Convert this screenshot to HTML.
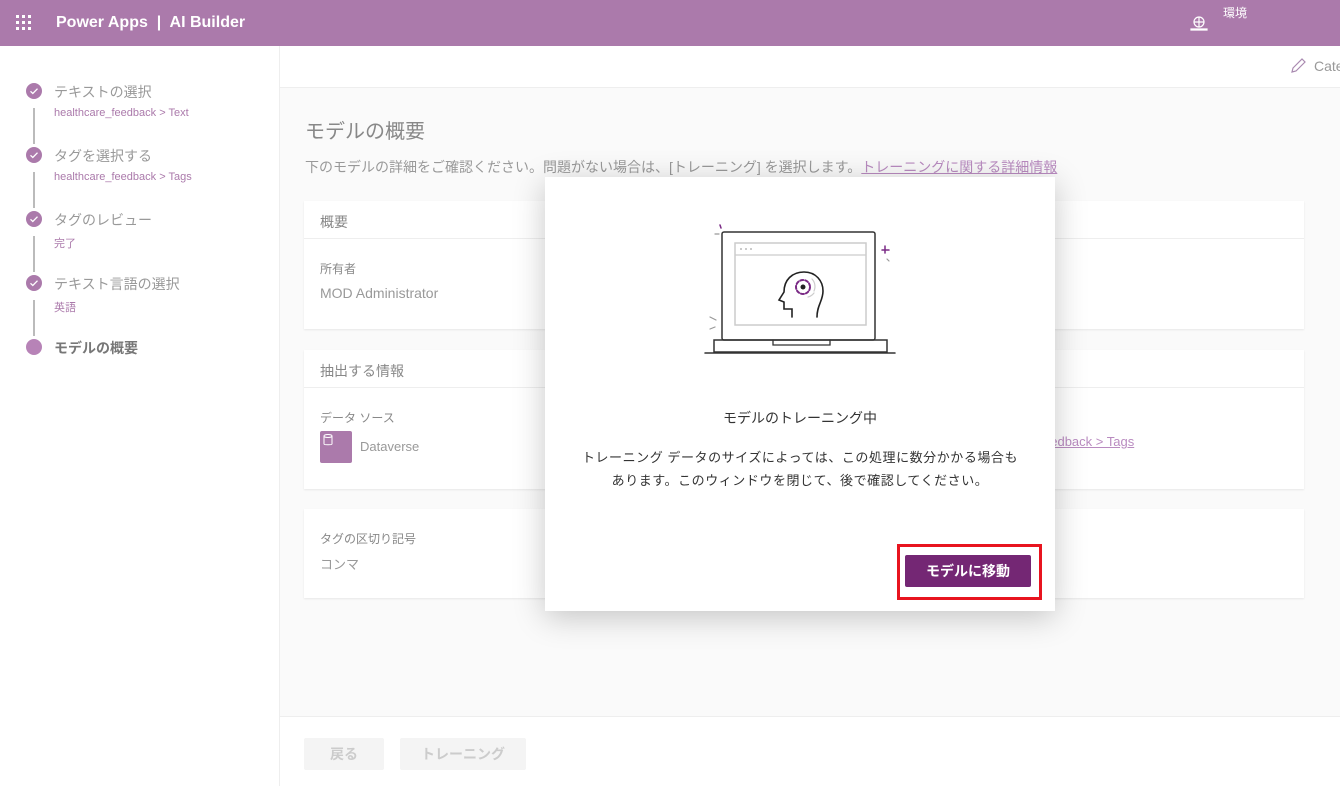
<!DOCTYPE html>
<html><head><meta charset="utf-8"><style>
*{margin:0;padding:0;box-sizing:border-box}
body{width:1340px;height:786px;overflow:hidden;font-family:"Liberation Sans","Noto Sans CJK JP",sans-serif;background:#fff;position:relative;color:#777}
.hdr{position:absolute;left:0;top:0;width:1340px;height:46px;background:#ab7aab;color:#fff}
.abs{position:absolute}
.side{position:absolute;left:0;top:46px;width:280px;height:740px;background:#fff;border-right:1px solid #eee}
.dot{position:absolute;left:26px;width:16px;height:16px;border-radius:50%;background:#ab7aab}
.line{position:absolute;left:33px;width:2px;background:#bbb}
.st{position:absolute;left:54px;font-size:14px;color:#999}
.ss{position:absolute;left:54px;font-size:11px;color:#ab7aab}
.main{position:absolute;left:280px;top:87px;width:1060px;height:629px;background:#fafafa;border-top:1px solid #eee}
.card{position:absolute;left:304px;width:1000px;background:#fff;box-shadow:0 1px 2px rgba(0,0,0,.08)}
.ch{height:38px;border-bottom:1px solid #eee;padding:11px 16px;font-size:14px;color:#888}
.lbl{font-size:12px;color:#888}
.val{font-size:14px;color:#999}
.foot{position:absolute;left:280px;top:716px;width:1060px;height:70px;background:#fff;border-top:1px solid #eee}
.btn{position:absolute;top:738px;height:32px;background:#f4f4f4;border-radius:2px;color:#ccc;font-size:14px;font-weight:bold;text-align:center;line-height:32px}
.modal{position:absolute;left:545px;top:177px;width:510px;height:434px;background:#fff;box-shadow:0 6px 30px rgba(0,0,0,.22)}
</style></head><body>
<div class="hdr">
 <svg class="abs" style="left:16px;top:15px" width="16" height="16"><g fill="#fff"><rect x="0" y="0" width="3" height="3"/><rect x="6" y="0" width="3" height="3"/><rect x="12" y="0" width="3" height="3"/><rect x="0" y="6" width="3" height="3"/><rect x="6" y="6" width="3" height="3"/><rect x="12" y="6" width="3" height="3"/><rect x="0" y="12" width="3" height="3"/><rect x="6" y="12" width="3" height="3"/><rect x="12" y="12" width="3" height="3"/></g></svg>
 <div class="abs" style="left:56px;top:14px;font-size:16px;font-weight:bold">Power Apps&nbsp; |&nbsp; AI Builder</div>
 <svg class="abs" style="left:1190px;top:15px" width="18" height="16" fill="none" stroke="#fff" stroke-width="1.2"><circle cx="9" cy="7" r="5"/><path d="M4 7h10M9 2v10M1 14h16v1H1z"/></svg>
 <div class="abs" style="left:1223px;top:4px;font-size:12px">環境</div>
</div>
<div class="side">
 <div class="line" style="top:62px;height:36px"></div>
 <div class="line" style="top:126px;height:36px"></div>
 <div class="line" style="top:190px;height:36px"></div>
 <div class="line" style="top:254px;height:36px"></div>
 <div class="dot" style="top:37px"><svg width="16" height="16"><path d="M4.5 8.3l2.3 2.2 4.7-4.8" stroke="#fff" stroke-width="1.3" fill="none"/></svg></div><div class="st" style="top:36px">テキストの選択</div><div class="ss" style="top:61px">healthcare_feedback &gt; Text</div>
 <div class="dot" style="top:101px"><svg width="16" height="16"><path d="M4.5 8.3l2.3 2.2 4.7-4.8" stroke="#fff" stroke-width="1.3" fill="none"/></svg></div><div class="st" style="top:100px">タグを選択する</div><div class="ss" style="top:125px">healthcare_feedback &gt; Tags</div>
 <div class="dot" style="top:165px"><svg width="16" height="16"><path d="M4.5 8.3l2.3 2.2 4.7-4.8" stroke="#fff" stroke-width="1.3" fill="none"/></svg></div><div class="st" style="top:164px">タグのレビュー</div><div class="ss" style="top:189px">完了</div>
 <div class="dot" style="top:229px"><svg width="16" height="16"><path d="M4.5 8.3l2.3 2.2 4.7-4.8" stroke="#fff" stroke-width="1.3" fill="none"/></svg></div><div class="st" style="top:228px">テキスト言語の選択</div><div class="ss" style="top:253px">英語</div>
 <div class="dot" style="top:293px;background:#b783b7"></div><div class="st" style="top:292px;color:#777;font-weight:bold">モデルの概要</div>
</div>
<svg class="abs" style="left:1290px;top:58px" width="16" height="16" fill="none" stroke="#a98ab0" stroke-width="1.2"><path d="M2 14l1-4 9-9 3 3-9 9z"/></svg>
<div class="abs" style="left:1314px;top:58px;font-size:14px;color:#999">Cate</div>
<div class="main"></div>
<div class="abs" style="left:305px;top:115px;font-size:20px;color:#888">モデルの概要</div>
<div class="abs" style="left:305px;top:157px;font-size:14px;color:#999">下のモデルの詳細をご確認ください。問題がない場合は、[トレーニング] を選択します。<span style="color:#b98bc0;text-decoration:underline">トレーニングに関する詳細情報</span></div>
<div class="card" style="top:201px;height:128px"><div class="ch">概要</div>
 <div class="lbl abs" style="left:16px;top:59px">所有者</div><div class="val abs" style="left:16px;top:84px">MOD Administrator</div></div>
<div class="card" style="top:350px;height:139px"><div class="ch">抽出する情報</div>
 <div class="lbl abs" style="left:16px;top:59px">データ ソース</div>
 <div class="abs" style="left:16px;top:81px;width:32px;height:32px;background:#ab7aab;border-radius:2px"><svg width="14" height="14" style="position:absolute;left:2px;top:2px" fill="none" stroke="#fff" stroke-width="1"><ellipse cx="6" cy="3" rx="4" ry="1.5"/><path d="M2 3v8c0 1 8 1 8 0V3"/></svg></div>
 <div class="val abs" style="left:56px;top:89px;font-size:13px">Dataverse</div>
 <div class="abs" style="left:739px;top:84px;font-size:13px;color:#b98bc0;text-decoration:underline">eedback &gt; Tags</div></div>
<div class="card" style="top:509px;height:89px">
 <div class="lbl abs" style="left:16px;top:21px">タグの区切り記号</div><div class="val abs" style="left:16px;top:45px;font-size:13px">コンマ</div></div>
<div class="foot"></div>
<div class="btn" style="left:304px;width:80px">戻る</div>
<div class="btn" style="left:400px;width:126px">トレーニング</div>
<div class="modal">
 <svg class="abs" style="left:150px;top:40px" width="210" height="145" fill="none" stroke-linecap="round">
  <rect x="27" y="15" width="153" height="108" rx="2" stroke="#333" stroke-width="1.5"/>
  <rect x="40" y="26" width="131" height="82" stroke="#ccc" stroke-width="1.5"/>
  <path d="M40 38h131" stroke="#ccc" stroke-width="1.3"/>
  <circle cx="46" cy="32" r="1" fill="#bbb"/><circle cx="51" cy="32" r="1" fill="#bbb"/><circle cx="56" cy="32" r="1" fill="#bbb"/>
  <rect x="19" y="123" width="173" height="12" stroke="#333" stroke-width="1.5"/>
  <path d="M78 123v5h57v-5" stroke="#333" stroke-width="1.3"/>
  <path d="M10 136h190" stroke="#333" stroke-width="1.5"/>
  <path d="M97 100v-8h-8v-7l-5-2 5-8c0-12 8-20 20-20c12 0 19 9 19 19c0 10-6 14-6 26" stroke="#222" stroke-width="1.6"/>
  <circle cx="108" cy="70" r="7" stroke="#7a2a85" stroke-width="2" stroke-dasharray="3 2"/>
  <circle cx="108" cy="70" r="2.5" fill="#222"/>
  <path d="M117 62a11 11 0 0 1 2 12M113 80a11 11 0 0 0 6-4" stroke="#ccc" stroke-width="1.2"/>
  <path d="M20 17h4M192 42l2 2M15 100l6 3M15 112l5-2" stroke="#999" stroke-width="1.2"/>
  <path d="M25 8l1 3M187 33h7M190 29v7" stroke="#7a2a85" stroke-width="1.5"/>
 </svg>
 <div class="abs" style="left:0;width:510px;top:231px;text-align:center;font-size:14px;color:#333">モデルのトレーニング中</div>
 <div class="abs" style="left:29px;width:452px;top:269px;font-size:13px;line-height:23px;color:#333;text-align:center;letter-spacing:0.55px">トレーニング データのサイズによっては、この処理に数分かかる場合も<br>あります。このウィンドウを閉じて、後で確認してください。</div>
 <div class="abs" style="left:352px;top:367px;width:145px;height:56px;border:3px solid #e8141f"></div>
 <div class="abs" style="left:360px;top:378px;width:126px;height:32px;background:#742774;border-radius:2px;color:#fff;font-size:14px;font-weight:bold;text-align:center;line-height:32px">モデルに移動</div>
</div>
</body></html>
